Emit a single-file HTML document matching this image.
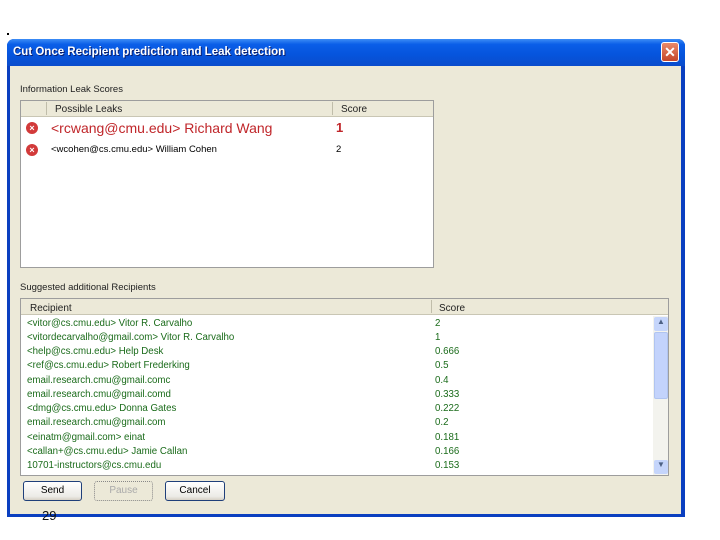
<!DOCTYPE html>
<html><head><meta charset="utf-8"><style>
*{margin:0;padding:0;box-sizing:border-box}
body{width:720px;height:540px;background:#fff;position:relative;overflow:hidden;font-family:"Liberation Sans",Tahoma,sans-serif;font-size:10px;color:#000}
.abs{position:absolute}
.win{left:7px;top:39px;width:678px;height:478px;background:#0a3fc0;border-radius:7px 7px 0 0}
.title{left:7px;top:39px;width:678px;height:27px;border-radius:7px 7px 0 0;background:linear-gradient(#3d8df5 0,#0a5ee8 20%,#0654dc 60%,#0a4ccc 100%)}
.title span{position:absolute;left:6px;top:7px;color:#fff;font-weight:bold;font-size:11.5px;text-shadow:1px 1px #0a1e6e}
.close{left:661px;top:42px;width:18px;height:20px;background:linear-gradient(#e98a68,#c5462a);border:1px solid #fff;border-radius:3px;color:#fff;font-weight:bold;font-size:14px;text-align:center;line-height:18px}
.body{left:10px;top:66px;width:671px;height:448px;background:#ece9d8}
.box{background:#fff;border:1px solid #9d9d9d}
.hdr{background:#ece9d8;border-bottom:1px solid #c9c6b4;height:16px;position:absolute;left:0;right:0;top:0;font-size:10px;color:#222}
.sep{position:absolute;top:1px;width:1px;height:13px;background:#c0bdaa}
.g{color:#1a6b1a;font-size:9.7px;position:absolute}
.btn{position:absolute;top:481px;height:20px;border:1px solid #1f3f7a;border-radius:3px;background:linear-gradient(#fff,#ecebe6 80%,#d6d0c5);font-size:10px;text-align:center;line-height:18px}
.x{position:absolute;width:12px;height:12px;border-radius:50%;background:#d23a3a;color:#fff;font-size:9px;font-weight:bold;text-align:center;line-height:12px}
</style></head><body>
<div class="abs" style="left:7px;top:33px;width:2px;height:2px;background:#000"></div>
<div class="abs win"></div>
<div class="abs title"><span>Cut Once Recipient prediction and Leak detection</span></div>
<div class="abs close">✕</div>
<div class="abs body"></div>
<div class="abs" style="left:20px;top:84px;font-size:9.5px;color:#222">Information Leak Scores</div>
<div class="abs box" style="left:20px;top:100px;width:414px;height:168px">
 <div class="hdr"><div class="sep" style="left:25px"></div><span class="abs" style="left:34px;top:3px">Possible Leaks</span><div class="sep" style="left:311px"></div><span class="abs" style="left:320px;top:3px">Score</span></div>
 <div class="x" style="left:5px;top:21px">×</div>
 <span class="abs" style="left:30px;top:19px;color:#c0262a;font-size:14px">&lt;rcwang@cmu.edu&gt; Richard Wang</span>
 <span class="abs" style="left:315px;top:19px;color:#c0262a;font-size:13px;font-weight:bold">1</span>
 <div class="x" style="left:5px;top:43px">×</div>
 <span class="abs" style="left:30px;top:43px;font-size:9.5px">&lt;wcohen@cs.cmu.edu&gt; William Cohen</span>
 <span class="abs" style="left:315px;top:43px;font-size:9.5px">2</span>
</div>
<div class="abs" style="left:20px;top:282px;font-size:9.5px;color:#222">Suggested additional Recipients</div>
<div class="abs box" style="left:20px;top:298px;width:649px;height:178px;overflow:hidden">
 <div class="hdr"><span class="abs" style="left:9px;top:4px">Recipient</span><div class="sep" style="left:410px"></div><span class="abs" style="left:418px;top:4px">Score</span></div>
 <div class="abs" style="left:632px;top:17px;width:15px;height:159px;background:#f3f3ee"></div>
 <div class="abs" style="left:633px;top:18px;width:14px;height:14px;background:#c5d5fb;border-radius:2px;font-size:8px;text-align:center;color:#4d6185">▲</div>
 <div class="abs" style="left:633px;top:33px;width:14px;height:67px;background:#c3d3fc;border:1px solid #b0c4f0;border-radius:2px"></div>
 <div class="abs" style="left:633px;top:161px;width:14px;height:14px;background:#c5d5fb;border-radius:2px;font-size:8px;text-align:center;color:#4d6185">▼</div>
 <div class="g" style="left:6px;top:19px">&lt;vitor@cs.cmu.edu&gt; Vitor R. Carvalho</div><div class="g" style="left:414px;top:19px">2</div>
 <div class="g" style="left:6px;top:33px">&lt;vitordecarvalho@gmail.com&gt; Vitor R. Carvalho</div><div class="g" style="left:414px;top:33px">1</div>
 <div class="g" style="left:6px;top:47px">&lt;help@cs.cmu.edu&gt; Help Desk</div><div class="g" style="left:414px;top:47px">0.666</div>
 <div class="g" style="left:6px;top:61px">&lt;ref@cs.cmu.edu&gt; Robert Frederking</div><div class="g" style="left:414px;top:61px">0.5</div>
 <div class="g" style="left:6px;top:76px">email.research.cmu@gmail.comc</div><div class="g" style="left:414px;top:76px">0.4</div>
 <div class="g" style="left:6px;top:90px">email.research.cmu@gmail.comd</div><div class="g" style="left:414px;top:90px">0.333</div>
 <div class="g" style="left:6px;top:104px">&lt;dmg@cs.cmu.edu&gt; Donna Gates</div><div class="g" style="left:414px;top:104px">0.222</div>
 <div class="g" style="left:6px;top:118px">email.research.cmu@gmail.com</div><div class="g" style="left:414px;top:118px">0.2</div>
 <div class="g" style="left:6px;top:133px">&lt;einatm@gmail.com&gt; einat</div><div class="g" style="left:414px;top:133px">0.181</div>
 <div class="g" style="left:6px;top:147px">&lt;callan+@cs.cmu.edu&gt; Jamie Callan</div><div class="g" style="left:414px;top:147px">0.166</div>
 <div class="g" style="left:6px;top:161px">10701-instructors@cs.cmu.edu</div><div class="g" style="left:414px;top:161px">0.153</div>
</div>
<div class="btn" style="left:23px;width:59px">Send</div>
<div class="btn" style="left:94px;width:59px;border:1px dotted #888;background:#ece9d8;color:#aaa">Pause</div>
<div class="btn" style="left:165px;width:60px">Cancel</div>
<div class="abs" style="left:42px;top:508px;font-size:13px;color:#111">29</div>
</body></html>
